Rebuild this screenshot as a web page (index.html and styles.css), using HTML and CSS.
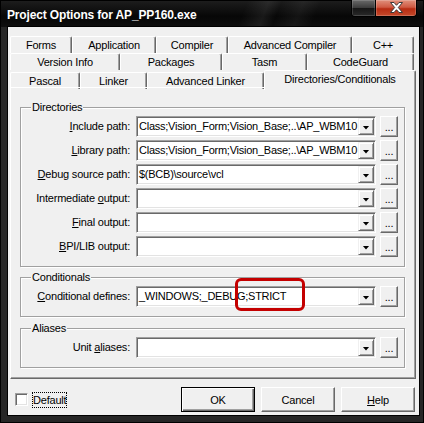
FILE: index.html
```html
<!DOCTYPE html>
<html>
<head>
<meta charset="utf-8">
<title>Project Options</title>
<link rel="stylesheet" href="styles.css">
</head>
<body>
<div class="window">
  <div class="titlebar">
    <span class="title">Project Options for AP_PP160.exe</span>
    <div class="caption-btns">
      <div class="cbtn cbtn-min"></div>
      <div class="cbtn cbtn-close">
        <svg width="15" height="11" viewBox="0 0 15 11"><polygon points="1.5,0.5 5,0.5 7.5,3.3 10,0.5 13.5,0.5 9.3,5.5 13.5,10.5 10,10.5 7.5,7.7 5,10.5 1.5,10.5 5.7,5.5" fill="#fff" stroke="#3a3a3a" stroke-width="1" stroke-linejoin="round"/></svg>
      </div>
    </div>
  </div>
  <div class="client">
    <div class="tabs">
      <div class="tab-row row-a">
        <div class="tab">Forms</div>
        <div class="tab">Application</div>
        <div class="tab">Compiler</div>
        <div class="tab">Advanced Compiler</div>
        <div class="tab">C++</div>
      </div>
      <div class="tab-row row-b">
        <div class="tab">Version Info</div>
        <div class="tab">Packages</div>
        <div class="tab">Tasm</div>
        <div class="tab">CodeGuard</div>
      </div>
      <div class="tab-row row-c">
        <div class="tab">Pascal</div>
        <div class="tab">Linker</div>
        <div class="tab">Advanced Linker</div>
        <div class="tab active">Directories/Conditionals</div>
      </div>
    </div>
    <div class="page">
      <div class="group">
        <div class="legend">Directories</div>
        <div class="rows">
          <div class="field-row">
            <span class="lbl"><u>I</u>nclude path:</span>
            <div class="combo"><span class="val">Class;Vision_Form;Vision_Base;..\AP_WBM10</span><span class="drop"></span></div>
            <div class="ell">...</div>
          </div>
          <div class="field-row">
            <span class="lbl"><u>L</u>ibrary path:</span>
            <div class="combo"><span class="val">Class;Vision_Form;Vision_Base;..\AP_WBM10</span><span class="drop"></span></div>
            <div class="ell">...</div>
          </div>
          <div class="field-row">
            <span class="lbl"><u>D</u>ebug source path:</span>
            <div class="combo"><span class="val">$(BCB)\source\vcl</span><span class="drop"></span></div>
            <div class="ell">...</div>
          </div>
          <div class="field-row">
            <span class="lbl">Intermediate <u>o</u>utput:</span>
            <div class="combo"><span class="val"></span><span class="drop"></span></div>
            <div class="ell">...</div>
          </div>
          <div class="field-row">
            <span class="lbl"><u>F</u>inal output:</span>
            <div class="combo"><span class="val"></span><span class="drop"></span></div>
            <div class="ell">...</div>
          </div>
          <div class="field-row">
            <span class="lbl"><u>B</u>PI/LIB output:</span>
            <div class="combo"><span class="val"></span><span class="drop"></span></div>
            <div class="ell">...</div>
          </div>
        </div>
      </div>
      <div class="group group-cond">
        <div class="legend">Conditionals</div>
        <div class="rows">
          <div class="field-row">
            <span class="lbl"><u>C</u>onditional defines:</span>
            <div class="combo"><span class="val">_WINDOWS;_DEBUG;STRICT</span><span class="drop"></span></div>
            <div class="ell">...</div>
          </div>
        </div>
      </div>
      <div class="group group-alias">
        <div class="legend">Aliases</div>
        <div class="rows">
          <div class="field-row">
            <span class="lbl">Unit <u>a</u>liases:</span>
            <div class="combo"><span class="val"></span><span class="drop"></span></div>
            <div class="ell">...</div>
          </div>
        </div>
      </div>
    </div>
    <div class="footer">
      <span class="checkbox"></span>
      <span class="chk-label">Default</span>
      <div class="btn-group">
        <div class="btn default">OK</div>
        <div class="btn">Cancel</div>
        <div class="btn"><u>H</u>elp</div>
      </div>
    </div>
  </div>
  <div class="annot"></div>
</div>
</body>
</html>
```

FILE: styles.css
```css
html, body {
  margin: 0;
  padding: 0;
  background: #fff;
}

body {
  font-family: "Liberation Sans", Arial, sans-serif;
  font-size: 11px;
  letter-spacing: -0.2px;
  color: #000;
}

.window {
  position: relative;
  width: 424px;
  height: 423px;
  background: #262626;
  box-shadow: inset 0 0 0 1px #000;
  display: flex;
  flex-direction: column;
}

/* ---------- title bar ---------- */
.titlebar {
  height: 27px;
  flex: none;
  display: flex;
  align-items: flex-start;
  background:
    linear-gradient(112deg, transparent 57%, rgba(255,255,255,0.07) 62%, transparent 65%, rgba(255,255,255,0.05) 70%, transparent 74%),
    linear-gradient(#1e1e1e, #070707 60%, #0e0e0e);
  box-shadow: inset 1px 1px 0 #000, inset -1px 0 0 #000;
}

.title {
  color: #fff;
  font-weight: bold;
  font-size: 12px;
  letter-spacing: -0.15px;
  line-height: 14px;
  margin: 8px 0 0 7px;
  white-space: nowrap;
}

.caption-btns {
  margin-left: auto;
  margin-right: 7px;
  display: flex;
  height: 17px;
  border: 1px solid #000;
  border-top: none;
  border-radius: 0 0 4px 4px;
  overflow: hidden;
  box-sizing: border-box;
}

.cbtn {
  height: 100%;
  display: flex;
  align-items: center;
  justify-content: center;
}

.cbtn-min {
  width: 23px;
  background: linear-gradient(#6a6a6a, #3c3c3c 48%, #161616 52%, #2a2a2a);
  border-right: 1px solid #000;
  box-shadow: inset 0 0 0 1px rgba(255,255,255,0.15);
}

.cbtn-close {
  width: 40px;
  background: linear-gradient(#e0907c, #cf5a43 45%, #b72c12 55%, #c44a2c);
  box-shadow: inset 0 0 0 1px rgba(255,255,255,0.2);
}

.cbtn-close svg {
  display: block;
  margin-top: -1px;
}

/* ---------- client area ---------- */
.client {
  flex: 1;
  margin: 0 5px 8px 8px;
  background: #f0f0f0;
  display: flex;
  flex-direction: column;
  box-shadow: 0 0 0 1px #000;
}

.tabs {
  margin: 9px 0 0 2px;
  display: flex;
  flex-direction: column;
  width: 406px;
}

.tab-row {
  display: grid;
  height: 17px;
  align-items: end;
}

.row-a { grid-template-columns: 62px 84px 72px 124px 62px; }
.row-b { grid-template-columns: 110px 102px 85px 107px; }
.row-c { grid-template-columns: 70px 67px 117px 152px; }

.tab {
  box-sizing: border-box;
  height: 17px;
  background: #f0f0f0;
  border-top: 1px solid #fff;
  border-left: 1px solid #fff;
  border-right: 1px solid #696969;
  box-shadow: inset -1px 0 0 #a0a0a0;
  border-radius: 2px 2px 0 0;
  display: flex;
  align-items: center;
  justify-content: center;
  white-space: nowrap;
  line-height: 14px;
  padding-bottom: 1px;
}

.tab.active {
  height: 20px;
  margin-bottom: -1px;
  position: relative;
  z-index: 1;
  padding-bottom: 3px;
}

/* ---------- tab page ---------- */
.page {
  box-sizing: border-box;
  width: 406px;
  height: 292px;
  margin-left: 2px;
  border-top: 1px solid #fff;
  border-left: 1px solid #fff;
  border-right: 1px solid #696969;
  border-bottom: 1px solid #696969;
  box-shadow: inset -1px -1px 0 #a0a0a0;
  padding: 19px 10px 0 9px;
  display: flex;
  flex-direction: column;
}

.group {
  border: 1px solid #a0a0a0;
  box-shadow: inset 1px 1px 0 #fff, 1px 1px 0 #fff;
  display: flex;
  flex-direction: column;
  padding-bottom: 9px;
}

.group-cond { margin-top: 10px; }
.group-alias { margin-top: 11px; }

.legend {
  align-self: flex-start;
  margin: -7px 0 0 10px;
  padding: 0 1px;
  background: #f0f0f0;
  line-height: 13px;
  white-space: nowrap;
}

.rows {
  margin-top: 2px;
  display: flex;
  flex-direction: column;
  gap: 3px;
}

.field-row {
  display: flex;
  height: 21px;
}

.lbl {
  width: 109px;
  margin-right: 6px;
  text-align: right;
  line-height: 21px;
  white-space: nowrap;
}

.combo {
  box-sizing: border-box;
  width: 240px;
  height: 21px;
  background: #fff;
  border: 1px solid;
  border-color: #a0a0a0 #fff #fff #a0a0a0;
  box-shadow: inset 1px 1px 0 #696969, inset -1px -1px 0 #e3e3e3;
  padding: 1px;
  display: flex;
}

.val {
  flex: 1;
  min-width: 0;
  overflow: hidden;
  white-space: nowrap;
  line-height: 17px;
  padding-left: 1px;
  letter-spacing: -0.25px;
}

.drop {
  box-sizing: border-box;
  width: 16px;
  height: 17px;
  flex: none;
  background: #f0f0f0;
  border: 1px solid;
  border-color: #f0f0f0 #696969 #696969 #f0f0f0;
  box-shadow: inset 1px 1px 0 #fff, inset -1px -1px 0 #a0a0a0;
  display: flex;
  align-items: center;
  justify-content: center;
}

.drop::after {
  content: "";
  width: 7px;
  height: 4px;
  margin-top: 2px;
  background: #000;
  clip-path: polygon(0 0, 100% 0, 50% 100%);
}

.ell {
  box-sizing: border-box;
  width: 18px;
  height: 21px;
  margin-left: 4px;
  background: #f0f0f0;
  border: 1px solid;
  border-color: #fff #696969 #696969 #fff;
  box-shadow: inset -1px -1px 0 #a0a0a0;
  display: flex;
  align-items: center;
  justify-content: center;
  line-height: 14px;
  padding-top: 1px;
}

/* ---------- footer ---------- */
.footer {
  margin-top: 8px;
  height: 25px;
  display: flex;
  align-items: center;
}

.checkbox {
  box-sizing: border-box;
  width: 13px;
  height: 13px;
  margin-left: 7px;
  background: #fff;
  border: 1px solid;
  border-color: #a0a0a0 #fff #fff #a0a0a0;
  box-shadow: inset 1px 1px 0 #696969, inset -1px -1px 0 #e3e3e3;
}

.chk-label {
  margin-left: 4px;
  padding: 1px;
  line-height: 14px;
  outline: 1px dotted #000;
  outline-offset: -1px;
}

.btn-group {
  margin-left: auto;
  margin-right: 4px;
  display: flex;
  gap: 6px;
}

.btn {
  box-sizing: border-box;
  width: 74px;
  height: 25px;
  background: #f0f0f0;
  border: 1px solid;
  border-color: #fff #696969 #696969 #fff;
  box-shadow: inset -1px -1px 0 #a0a0a0;
  display: flex;
  align-items: center;
  justify-content: center;
  line-height: 14px;
}

.btn.default {
  border-color: #000;
  box-shadow: inset 1px 1px 0 #fff, inset -1px -1px 0 #696969, inset -2px -2px 0 #a0a0a0;
}

/* ---------- annotation overlay ---------- */
.annot {
  position: absolute;
  left: 235px;
  top: 278px;
  width: 70px;
  height: 33px;
  box-sizing: border-box;
  border: 3px solid #c40000;
  border-radius: 6px;
}
```
